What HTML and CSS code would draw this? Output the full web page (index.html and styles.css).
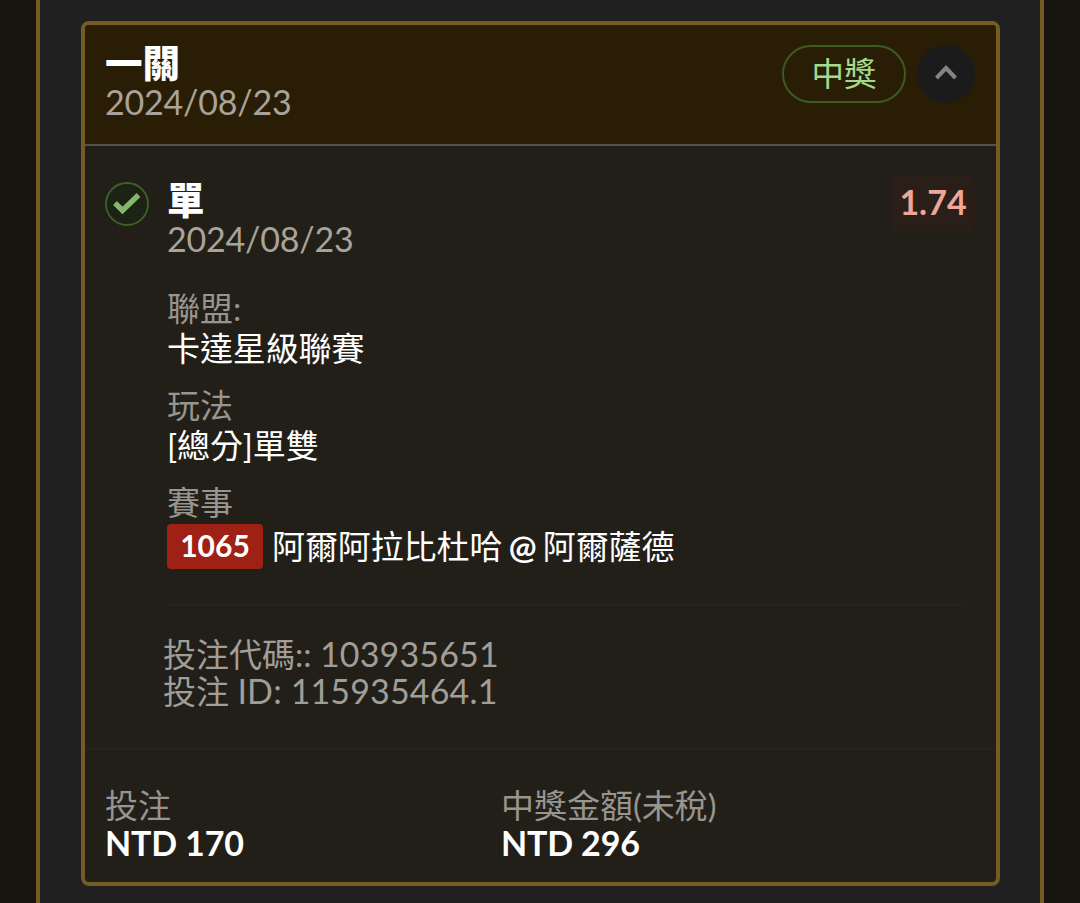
FILE: index.html
```html
<!DOCTYPE html>
<html lang="zh-Hant">
<head>
  <meta charset="UTF-8">
  <meta name="viewport" content="width=device-width, initial-scale=1.0">
  <title>投注紀錄</title>
  <link rel="stylesheet" href="styles.css">
</head>
<body>
  <div class="panel">
    <div class="card">
      <div class="card-header">
        <div>
          <h2 class="title">一關</h2>
          <div class="date">2024/08/23</div>
        </div>
        <div class="actions">
          <span class="status">中獎</span>
          <button class="toggle" type="button" aria-label="收合">
            <svg width="58" height="58" viewBox="0 0 58 58"><path d="M19.5 33L29 23L38.5 33" fill="none" stroke="#85847f" stroke-width="4"/></svg>
          </button>
        </div>
      </div>

      <div class="bet">
        <svg class="check" width="44" height="44" viewBox="0 0 44 44">
          <circle cx="22" cy="22" r="21" fill="#1d2314" stroke="#3c6229" stroke-width="1.8"/>
          <path d="M10 21L17.5 28.5L33.5 13" fill="none" stroke="#83b76b" stroke-width="5.4"/>
        </svg>
        <div class="bet-info">
          <div class="bet-top">
            <div>
              <h3 class="title">單</h3>
              <div class="date">2024/08/23</div>
            </div>
            <span class="odds">1.74</span>
          </div>

          <div class="field">
            <div class="label">聯盟:</div>
            <div class="value">卡達星級聯賽</div>
          </div>
          <div class="field">
            <div class="label">玩法</div>
            <div class="value">[總分]單雙</div>
          </div>
          <div class="field">
            <div class="label">賽事</div>
            <div class="match">
              <span class="match-id">1065</span>
              <span class="value teams">阿爾阿拉比杜哈 <b>@</b> 阿爾薩德</span>
            </div>
          </div>

          <div class="codes">
            <div>投注代碼:: <span class="num">103935651</span></div>
            <div>投注 <span class="num">ID: 115935464.1</span></div>
          </div>
        </div>
      </div>

      <div class="card-footer">
        <div class="amount">
          <div class="label">投注</div>
          <div class="money">NTD 170</div>
        </div>
        <div class="amount">
          <div class="label">中獎金額(未稅)</div>
          <div class="money">NTD 296</div>
        </div>
      </div>
    </div>
  </div>
</body>
</html>
```
FILE: styles.css
```css
* {
  margin: 0;
  padding: 0;
  box-sizing: border-box;
}

body {
  font-family: Lato, "Noto Sans CJK TC", sans-serif;
  font-size: 33px;
  line-height: 37px;
  color: #fff;
  background-color: #18150e;
  height: 903px;
  overflow: hidden;
}

.panel {
  height: 903px;
  margin: 0 36px;
  padding: 21px 41px 0;
  border: solid #745c22;
  border-width: 0 4px;
  background-color: #202020;
}

.card {
  height: 865px;
  width: 919px;
  border: 4px solid #745c22;
  border-radius: 8px;
  background-color: #221f19;
  overflow: hidden;
}

.card-header {
  display: flex;
  justify-content: space-between;
  height: 121px;
  padding: 21px 20px 0;
  background-color: #291e05;
  border-bottom: 2px solid #55524a;
}

.title {
  height: 37px;
  font-size: 37.5px;
  font-weight: 900;
  line-height: 33px;
}

.date {
  font-size: 34px;
  letter-spacing: -0.2px;
  color: #a8a39b;
}

.actions {
  display: flex;
  gap: 11px;
  margin: -1px 1px 0 0;
}

.status {
  width: 124px;
  height: 58px;
  line-height: 53px;
  font-size: 32.5px;
  text-align: center;
  color: #a5d98b;
  border: 2px solid #3c5a22;
  border-radius: 29px;
}

.toggle {
  width: 58px;
  height: 58px;
  border: none;
  border-radius: 50%;
  background-color: #1b1b1c;
}

.toggle svg {
  display: block;
}

.bet {
  display: flex;
  height: 604px;
  padding: 37px 20px 0;
  border-bottom: 2px solid #26231e;
}

.check {
  flex: none;
  margin-right: 18px;
  margin-top: -1px;
}

.bet-info {
  flex: 1;
}

.bet-top {
  display: flex;
  justify-content: space-between;
  height: 105px;
}

.odds {
  width: 84px;
  height: 56px;
  margin: -8px 1px 0 0;
  line-height: 54px;
  font-size: 34px;
  font-weight: bold;
  text-align: center;
  color: #efa699;
  background-color: #2a1e18;
  border-radius: 6px;
}

.field {
  margin-bottom: 17px;
  line-height: 40px;
}

.label {
  color: #98948e;
}

.value {
  letter-spacing: -0.1px;
}

.teams {
  margin-top: -2px;
  word-spacing: -2px;
}

.match {
  display: flex;
  align-items: center;
  gap: 9px;
  padding-top: 2px;
}

.match-id {
  width: 96px;
  height: 45px;
  line-height: 43px;
  font-size: 30px;
  text-align: center;
  font-weight: bold;
  background-color: #9f2015;
  border-radius: 4px;
}

.codes {
  margin-top: 35px;
  margin-right: 12px;
  padding-top: 29px;
  border-top: 2px solid #26231e;
  color: #a19d97;
}

.codes div {
  margin-left: -4px;
}

.codes div + div {
  margin-top: -1px;
}

.num {
  font-size: 34px;
  letter-spacing: 0.15px;
}

.card-footer {
  display: grid;
  grid-template-columns: 396px 1fr;
  padding: 37px 20px 0;
}

.money {
  font-size: 34px;
  font-weight: bold;
  letter-spacing: -0.15px;
}
```
